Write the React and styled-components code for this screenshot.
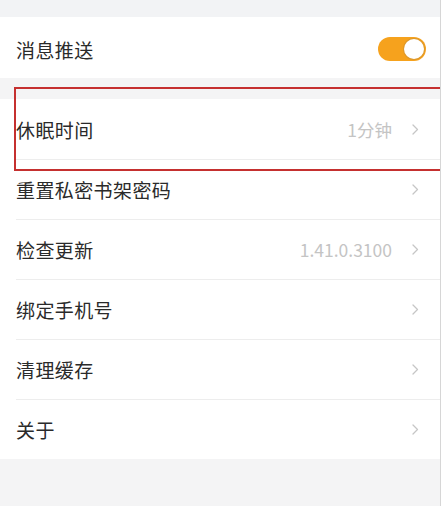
import React from "react";
import styled, { createGlobalStyle } from "styled-components";

const Global = createGlobalStyle`
  html, body { margin: 0; padding: 0; background: #ffffff; }
  body { font-family: "Noto Sans CJK SC", "Noto Sans", sans-serif; }
`;

const Page = styled.div`
  position: relative;
  width: 441px;
  height: 506px;
  box-sizing: border-box;
  border-right: 1px solid #d6d6d6;
  background: #f4f4f5;
  display: flex;
  flex-direction: column;
  overflow: hidden;
`;

const Spacer = styled.div`
  height: ${(p) => p.$h}px;
  flex: none;
  background: ${(p) => p.$bg || "#f4f4f5"};
`;

const Group = styled.div`
  background: #ffffff;
  padding-left: 16px;
  display: flex;
  flex-direction: column;
`;

const Row = styled.div`
  height: ${(p) => p.$h || 60}px;
  box-sizing: border-box;
  display: flex;
  align-items: center;
  padding-right: ${(p) => p.$pr || 21}px;
  border-top: ${(p) => (p.$first ? "none" : "1px solid #ededed")};
`;

const Label = styled.span`
  flex: 1;
  font-size: 19px;
  color: #2a2a2a;
  letter-spacing: 0.4px;
  padding-top: ${(p) => p.$dy || 0}px;
`;

const Value = styled.span`
  font-size: 17.5px;
  color: #c4c4c4;
  margin-right: 20px;
`;

const Toggle = styled.div`
  width: 48px;
  height: 24px;
  border-radius: 12px;
  background: #f6a21d;
  display: flex;
  align-items: center;
  justify-content: flex-end;
  padding: 0 2px;
  box-sizing: border-box;
  margin-top: 2px;
`;

const Knob = styled.div`
  width: 20px;
  height: 20px;
  border-radius: 50%;
  background: #ffffff;
  box-shadow: 0 0 0 1px rgba(190, 140, 60, 0.45);
`;

const Highlight = styled.div`
  position: absolute;
  left: 14px;
  top: 87px;
  width: 440px;
  height: 84px;
  box-sizing: border-box;
  border: 2px solid #c5302f;
  pointer-events: none;
`;

const Chevron = () => (
  <svg width="7" height="11" viewBox="0 0 7 11" fill="none">
    <path d="M1 1l4.5 4.5L1 10" stroke="#c6c6c6" strokeWidth="1.3" strokeLinecap="round" strokeLinejoin="round" />
  </svg>
);

const items = [
  { label: "休眠时间", value: "1分钟" },
  { label: "重置私密书架密码" },
  { label: "检查更新", value: "1.41.0.3100" },
  { label: "绑定手机号" },
  { label: "清理缓存" },
  { label: "关于" },
];

export default function App() {
  return (
    <Page>
      <Global />
      <Spacer $h={17} $bg="#f2f3f5" />
      <Group>
        <Row $first $h={61} $pr={14}>
          <Label $dy={4}>消息推送</Label>
          <Toggle>
            <Knob />
          </Toggle>
        </Row>
      </Group>
      <Spacer $h={21} />
      <Group>
        {items.map((it, i) => (
          <Row key={it.label} $first={i === 0}>
            <Label>{it.label}</Label>
            {it.value && <Value>{it.value}</Value>}
            <Chevron />
          </Row>
        ))}
      </Group>
      <Spacer $h={47} />
      <Highlight />
    </Page>
  );
}
